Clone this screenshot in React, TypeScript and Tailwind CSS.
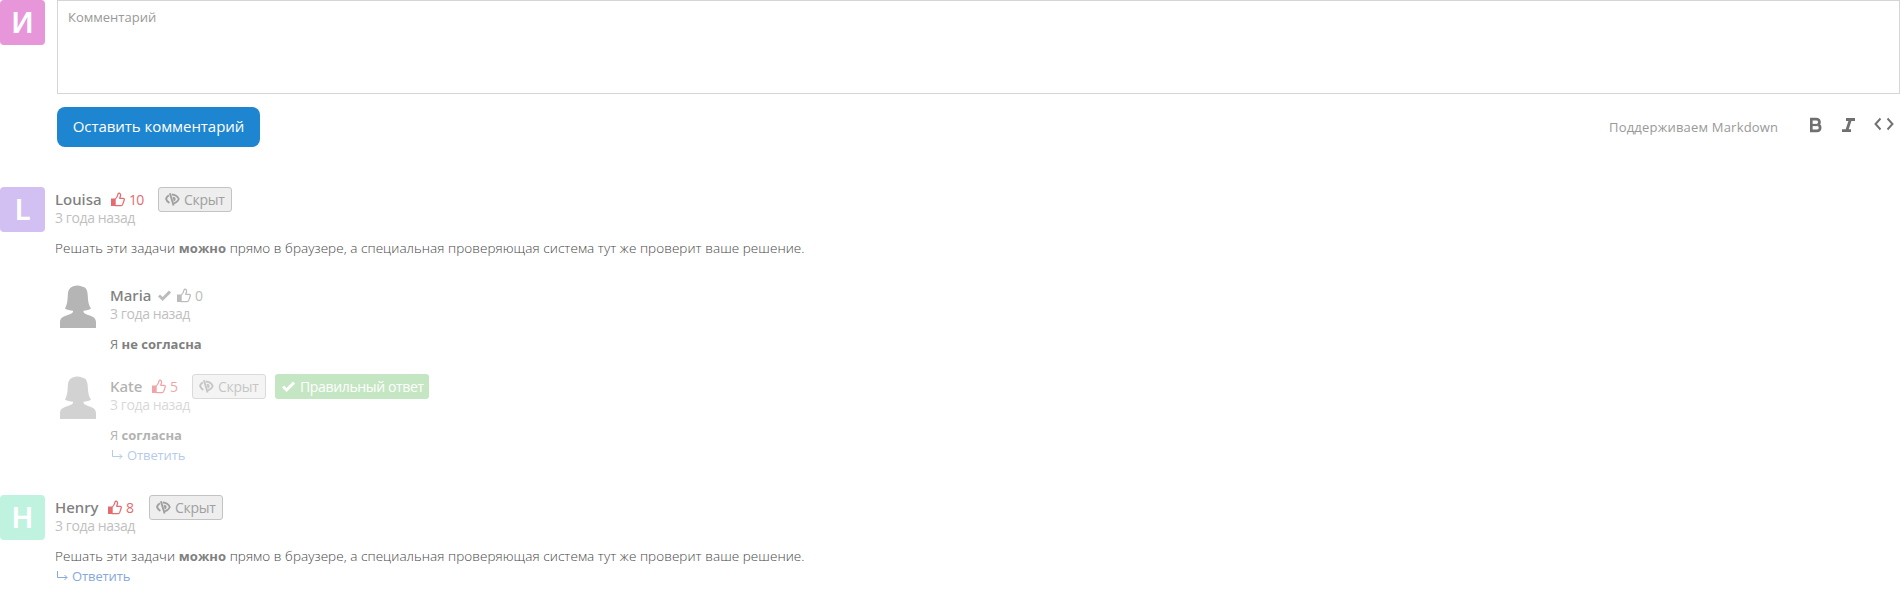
import React from "react";

function ThumbIcon() {
  return (
    <svg width="14" height="15" viewBox="0 0 14 15" className="block shrink-0">
      <path d="M0 6.500h4.200V14H0z" fill="currentColor" />
      <path
        d="M4 7.400C5.600 6 6.600 4.400 7.300 1.400c1.800-.6 2.600.8 2.200 2.400L8.700 6.300h3.500c1 0 1.300.9 1 1.700L11.700 12.400c-.3.800-.8 1.100-1.500 1.100H4z"
        fill="none"
        stroke="currentColor"
        strokeWidth="1.250"
        strokeLinejoin="round"
      />
    </svg>
  );
}

function HiddenIcon() {
  return (
    <svg width="15" height="13" viewBox="0 0 15 13" className="block shrink-0">
      <path d="M3.800 2.200C2.400 3.300 1.300 4.900 1.100 6c.4 1.500 1.600 2.900 3.300 3.800" fill="none" stroke="currentColor" strokeWidth="1.900" />
      <path d="M6.800 1.500c3.600.2 5.900 2.100 7 4.500-1 2.200-2.800 3.800-5.200 4.500" fill="none" stroke="currentColor" strokeWidth="1.800" />
      <path d="M7.600 3.800c1.900 0 3 .8 3 2.200 0 1.300-.8 2.200-1.900 2.500z" fill="currentColor" />
      <path d="M4.900.3l3.700 12.200" fill="none" stroke="currentColor" strokeWidth="1.900" />
    </svg>
  );
}

function CheckIcon() {
  return (
    <svg width="13" height="11" viewBox="0 0 13 11" className="block shrink-0">
      <path d="M1 5.500l3.600 3.500L12 1.600" fill="none" stroke="currentColor" strokeWidth="2.900" />
    </svg>
  );
}

function ReplyIcon() {
  return (
    <svg width="11" height="10" viewBox="0 0 11 10" className="block shrink-0">
      <path d="M.5 0v6.500h9.500M7.500 4L10 6.500 7.500 9" fill="none" stroke="currentColor" />
    </svg>
  );
}

function Silhouette() {
  return (
    <svg width="36" height="43" viewBox="0 0 36 43" className="block" fill="#b5b5b5">
      <path d="M17.500.5c3 0 4 1 5 1.200 3.500.3 5 3.600 5.200 8.300.3 6 .9 10.500 3.300 13.500-1.700 1.500-4.500 2-7.500 2.200v1.300c1 1.800 3.200 2.500 6 3.400 4.500 1.400 6.500 3.200 6.500 6.900V43H0v-5.700c0-3.700 2-5.500 6.500-6.900 2.800-.9 5.500-1.600 6.500-3.400v-1.300c-3-.2-6-.7-8-2.200C7 20 7.600 16 7.800 10c.2-6 3.200-9.500 9.700-9.500z" />
    </svg>
  );
}

function Avatar({ letter, color }: { letter: string; color: string }) {
  return (
    <div className={`flex h-[45px] w-[45px] shrink-0 items-center justify-center rounded-[4px] pb-[2px] font-['Noto_Sans',sans-serif] text-[29.5px] leading-[43px] font-semibold text-white ${color}`}>
      {letter}
    </div>
  );
}

function Name({ children, width }: { children: string; width: string }) {
  return <span className={`font-['Noto_Sans',sans-serif] text-[15px] font-medium text-[#808080] ${width}`}>{children}</span>;
}

function HiddenBadge() {
  return (
    <span className="flex h-[25px] w-[74px] shrink-0 items-center gap-1 rounded-[3px] border border-[#c3c3c3] bg-[#eee] pl-[6px] text-[14px] tracking-[-0.25px] text-[#a0a0a0]">
      <HiddenIcon />
      Скрыт
    </span>
  );
}

function Likes({ count, color }: { count: number; color: string }) {
  return (
    <span className={`flex items-center gap-1 text-[14px] tracking-[-0.7px] ${color}`}>
      <ThumbIcon />
      <span>{count}</span>
    </span>
  );
}

function DateLine() {
  return <div className="h-[17px] text-[14px] leading-[12px] tracking-[-0.4px] text-[#bfbfbf]">3 года назад</div>;
}

function Reply() {
  return (
    <div className="flex h-5 items-center gap-1 pl-[2px] text-[13px] leading-5 tracking-[-0.1px] text-[#85a9da]">
      <ReplyIcon />
      Ответить
    </div>
  );
}

function Body() {
  return (
    <div className="mt-[9px] h-5 text-[13.5px] leading-5 font-light tracking-[0.06px] whitespace-nowrap text-[#484848]">
      Решать эти задачи <b className="text-[13px] font-bold text-[#808080]">можно</b> прямо в браузере, а специальная проверяющая система тут же проверит ваше решение.
    </div>
  );
}

export default function App() {
  return (
    <div className="h-[596px] w-[1900px] overflow-hidden bg-white font-['Open_Sans','Noto_Sans',sans-serif]">
      <div className="flex h-[187px] gap-3">
        <Avatar letter="И" color="bg-[#e796d9]" />
        <div className="flex-1">
          <div className="h-[94px] border border-[#d5d5d5] px-[10px] py-[6px] text-[13px] leading-5 text-[#999]">Комментарий</div>
          <div className="mt-[13px] flex h-10 items-center">
            <button className="h-10 w-[203px] rounded-[8px] bg-[#1e85d1] pb-[2px] text-[15px] tracking-[-0.05px] whitespace-nowrap text-white">Оставить комментарий</button>
            <span className="ml-auto w-[201px] pt-px text-[13px] tracking-[0.2px] whitespace-nowrap text-[#999]">Поддерживаем Markdown</span>
            <div className="flex h-full w-[90px] pt-[10px] text-[#707070]">
              <svg width="32" height="16" viewBox="0 0 32 16"><path d="M1.300 2.200h4.800c4.200 0 4.200 4.800 1.300 5.500 3.900.7 3.500 6.100-.6 6.100H1.300z" fill="none" stroke="currentColor" strokeWidth="2.700" /><path d="M1 8h6" stroke="currentColor" strokeWidth="2.200" /></svg>
              <svg width="32" height="16" viewBox="0 0 32 16"><path d="M4 2.500h9M0 13.700h9M8.600 2l-4 12" fill="none" stroke="currentColor" strokeWidth="2.800" /></svg>
              <svg width="20" height="16" viewBox="0 0 20 16"><path d="M6.500 1.500L1.500 7l5 5.500M13.500 1.500l5 5.500-5 5.500" fill="none" stroke="currentColor" strokeWidth="1.900" /></svg>
            </div>
          </div>
        </div>
      </div>

      <article className="flex h-[96px] gap-[10px]">
        <Avatar letter="L" color="bg-[#d2c0f2]" />
        <div>
          <div className="flex h-[25px] items-center">
            <Name width="w-14">Louisa</Name>
            <span className="w-[47px]"><Likes count={10} color="text-[#e56b70]" /></span>
            <HiddenBadge />
          </div>
          <DateLine />
          <Body />
        </div>
      </article>

      <article className="flex h-[91px] gap-[14px] pl-[60px]">
        <div className="pt-[2px]"><Silhouette /></div>
        <div>
          <div className="flex h-[25px] items-center">
            <Name width="w-12">Maria</Name>
            <span className="w-[19px] text-[#bcbcbc]"><CheckIcon /></span>
            <Likes count={0} color="text-[#bcbcbc]" />
          </div>
          <DateLine />
          <div className="mt-[9px] h-5 text-[13px] leading-5 text-[#808080]">Я <b>не согласна</b></div>
        </div>
      </article>

      <article className="flex h-[121px] gap-[14px] pl-[60px] opacity-60">
        <div className="pt-[2px]"><Silhouette /></div>
        <div>
          <div className="flex h-[25px] items-center">
            <Name width="w-[42px]">Kate</Name>
            <span className="w-10"><Likes count={5} color="text-[#e56b70]" /></span>
            <HiddenBadge />
            <span className="ml-[9px] flex h-[25px] w-[154px] items-center gap-[5px] rounded-[3px] bg-[#9ed69c] pl-[7px] text-[14px] tracking-[-0.35px] whitespace-nowrap text-white"><CheckIcon />Правильный ответ</span>
          </div>
          <DateLine />
          <div className="mt-[9px] h-5 text-[13px] leading-5 text-[#808080]">Я <b>согласна</b></div>
          <Reply />
        </div>
      </article>

      <article className="flex h-[101px] gap-[10px]">
        <Avatar letter="H" color="bg-[#c0f2e0]" />
        <div>
          <div className="flex h-[25px] items-center">
            <Name width="w-[53px]">Henry</Name>
            <span className="w-[41px]"><Likes count={8} color="text-[#e56b70]" /></span>
            <HiddenBadge />
          </div>
          <DateLine />
          <Body />
          <Reply />
        </div>
      </article>
    </div>
  );
}
